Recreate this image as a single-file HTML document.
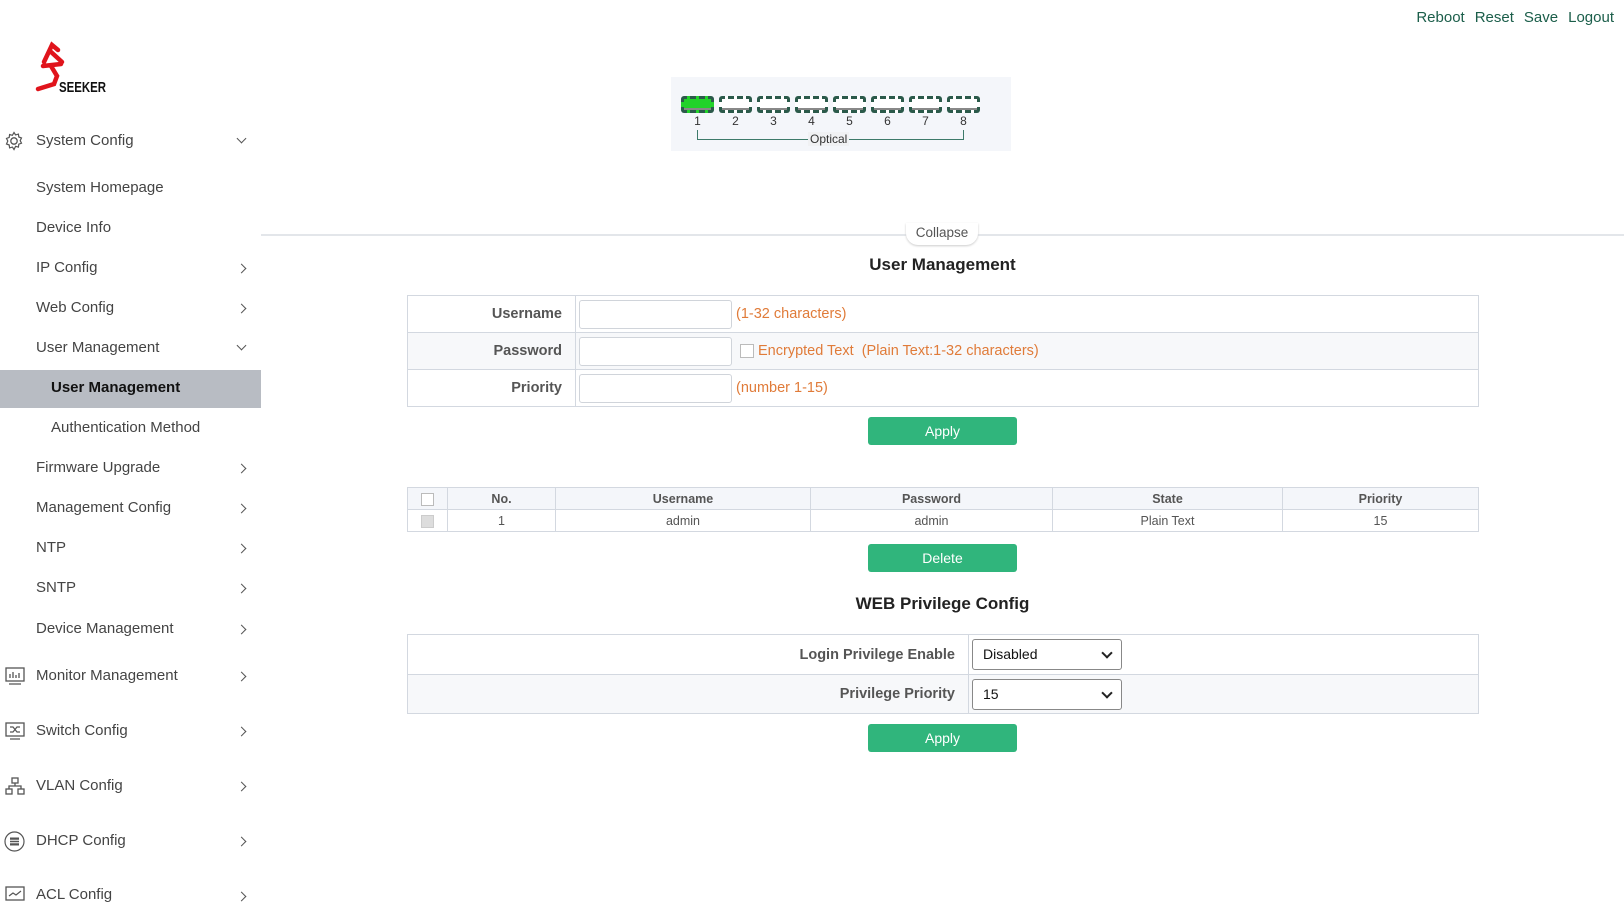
<!DOCTYPE html>
<html><head><meta charset="utf-8"><style>
*{box-sizing:border-box;margin:0;padding:0}
body{width:1624px;height:901px;overflow:hidden;background:#fff;font-family:"Liberation Sans","Noto Sans CJK SC",sans-serif;color:#333;position:relative}
.a{position:absolute}
.top{top:9px;right:10px;font-size:15px;color:#1b5e4a;word-spacing:0}
.top span{margin-left:10px}
.nav{font-size:15px;color:#444;white-space:nowrap}
.chev{position:absolute;left:238px;width:7px;height:7px;border-right:1.4px solid #555;border-bottom:1.4px solid #555;transform:rotate(-45deg)}
.chev.d{transform:rotate(45deg)}
table{border-collapse:collapse}
.f td{border:1px solid #d3d8e0;height:37px}
.lab{text-align:right;font-weight:bold;font-size:14.5px;color:#555;padding-right:13px}
.inp{display:inline-block;width:153px;height:29px;border:1px solid #d0d4da;border-radius:3px;vertical-align:middle;margin-left:3px}
.hint{color:#e07b39;font-size:14.5px;margin-left:4px;vertical-align:middle}
.btn{position:absolute;left:868px;width:149px;height:28px;background:#30b57c;color:#fff;font-size:14px;text-align:center;line-height:28px;border-radius:3px}
.t2 td{border:1px solid #d3d8e0;text-align:center;font-size:12.5px;color:#555;height:22px}
.sel{display:inline-block;width:150px;height:31px;border:1px solid #888;border-radius:3px;margin-left:3px;vertical-align:middle;font-size:14px;line-height:29px;padding-left:10px;position:relative;color:#111}
.sel:after{content:"";position:absolute;right:10px;top:9px;width:6px;height:6px;border-right:2px solid #222;border-bottom:2px solid #222;transform:rotate(45deg)}
.port{position:absolute;top:96px;width:33px;height:17px;border:3px dashed #2b5a4a;border-radius:3px;background:#fff;box-shadow:inset 0 -2px 0 #888}
.pn{position:absolute;top:114px;font-size:12px;color:#333;width:33px;text-align:center}
</style></head><body>
<div class="a top"><span>Reboot</span><span>Reset</span><span>Save</span><span>Logout</span></div>

<svg class="a" style="left:34px;top:40px" width="80" height="55" viewBox="0 0 80 55">
<path d="M10 22 L18 5 L24 10 M16 11 L28 22 M9 26 L27 24 M17 26 L23 36 L20 44 L4 49" stroke="#e0141c" stroke-width="4.5" fill="none" stroke-linecap="round"/>
<text x="25" y="52" font-family="Liberation Sans Narrow,Liberation Sans" font-size="15" font-weight="bold" fill="#111" textLength="47" lengthAdjust="spacingAndGlyphs">SEEKER</text>
</svg>

<div class="a" style="left:0;top:370px;width:261px;height:38px;background:#b8bcc3"></div>
<svg class="a" style="left:4px;top:131px" width="20" height="20" viewBox="0 0 20 20"><circle cx="10" cy="10" r="3.2" fill="none" stroke="#555" stroke-width="1.3"/><path d="M10 1.5l1.6 2.4 2.8-.8.4 2.9 2.7 1-1.3 2.6 1.3 2.6-2.7 1-.4 2.9-2.8-.8L10 18.5l-1.6-2.4-2.8.8-.4-2.9-2.7-1L3.8 10 2.5 7.4l2.7-1 .4-2.9 2.8.8z" fill="none" stroke="#555" stroke-width="1.2"/></svg>
<div class="a nav" style="left:36px;top:132px">System Config</div><div class="chev d" style="top:135px"></div>
<div class="a nav" style="left:36px;top:179px">System Homepage</div>
<div class="a nav" style="left:36px;top:219px">Device Info</div>
<div class="a nav" style="left:36px;top:259px">IP Config</div><div class="chev" style="top:265px"></div>
<div class="a nav" style="left:36px;top:299px">Web Config</div><div class="chev" style="top:305px"></div>
<div class="a nav" style="left:36px;top:339px">User Management</div><div class="chev d" style="top:342px"></div>
<div class="a nav" style="left:51px;top:379px;font-weight:bold;color:#111">User Management</div>
<div class="a nav" style="left:51px;top:419px">Authentication Method</div>
<div class="a nav" style="left:36px;top:459px">Firmware Upgrade</div><div class="chev" style="top:465px"></div>
<div class="a nav" style="left:36px;top:499px">Management Config</div><div class="chev" style="top:505px"></div>
<div class="a nav" style="left:36px;top:539px">NTP</div><div class="chev" style="top:545px"></div>
<div class="a nav" style="left:36px;top:579px">SNTP</div><div class="chev" style="top:585px"></div>
<div class="a nav" style="left:36px;top:620px">Device Management</div><div class="chev" style="top:626px"></div>
<svg class="a" style="left:5px;top:667px" width="20" height="18" viewBox="0 0 20 18"><rect x="1" y="1" width="18" height="13" fill="none" stroke="#555" stroke-width="1.3"/><path d="M5 11V7M8 11V5M11 11V8M14 11V6M4 17h12" stroke="#555" stroke-width="1.3"/></svg>
<div class="a nav" style="left:36px;top:667px">Monitor Management</div><div class="chev" style="top:673px"></div>
<svg class="a" style="left:5px;top:722px" width="20" height="18" viewBox="0 0 20 18"><rect x="1" y="1" width="18" height="13" fill="none" stroke="#555" stroke-width="1.3"/><path d="M5 5h3l4 5h3M5 10h3l4-5h3M5 17h10" stroke="#555" stroke-width="1.2" fill="none"/></svg>
<div class="a nav" style="left:36px;top:722px">Switch Config</div><div class="chev" style="top:728px"></div>
<svg class="a" style="left:5px;top:777px" width="20" height="19" viewBox="0 0 20 19"><rect x="7" y="1" width="6" height="5" fill="none" stroke="#555" stroke-width="1.3"/><rect x="1" y="12" width="6" height="5" fill="none" stroke="#555" stroke-width="1.3"/><rect x="13" y="12" width="6" height="5" fill="none" stroke="#555" stroke-width="1.3"/><path d="M10 6v3M4 12V9h12v3" stroke="#555" stroke-width="1.3" fill="none"/></svg>
<div class="a nav" style="left:36px;top:777px">VLAN Config</div><div class="chev" style="top:783px"></div>
<svg class="a" style="left:4px;top:831px" width="21" height="21" viewBox="0 0 21 21"><circle cx="10.5" cy="10.5" r="9.5" fill="none" stroke="#555" stroke-width="1.2"/><rect x="6" y="6.5" width="9" height="8" fill="#555"/><path d="M6 9.2h9M6 11.8h9" stroke="#fff" stroke-width="1"/></svg>
<div class="a nav" style="left:36px;top:832px">DHCP Config</div><div class="chev" style="top:838px"></div>
<svg class="a" style="left:5px;top:886px" width="20" height="15" viewBox="0 0 20 15"><rect x="1" y="1" width="18" height="13" fill="none" stroke="#555" stroke-width="1.3"/><path d="M4 10l4-3 3 2 5-4" stroke="#555" stroke-width="1.2" fill="none"/></svg>
<div class="a nav" style="left:36px;top:886px">ACL Config</div><div class="chev" style="top:893px"></div>

<div class="a" style="left:671px;top:77px;width:340px;height:74px;background:#f4f6fa"></div>
<div class="port" style="left:681px;background:#22d22a"></div><div class="pn" style="left:681px">1</div>
<div class="port" style="left:719px"></div><div class="pn" style="left:719px">2</div>
<div class="port" style="left:757px"></div><div class="pn" style="left:757px">3</div>
<div class="port" style="left:795px"></div><div class="pn" style="left:795px">4</div>
<div class="port" style="left:833px"></div><div class="pn" style="left:833px">5</div>
<div class="port" style="left:871px"></div><div class="pn" style="left:871px">6</div>
<div class="port" style="left:909px"></div><div class="pn" style="left:909px">7</div>
<div class="port" style="left:947px"></div><div class="pn" style="left:947px">8</div>
<div class="a" style="left:697px;top:130px;width:267px;height:10px;border:1px solid #3d7a6a;border-top:none"></div>
<div class="a" style="left:808px;top:132px;font-size:12px;background:#f0f1f3;padding:0 2px">Optical</div>

<div class="a" style="left:261px;top:234px;width:1363px;height:2px;background:#e3e6ea"></div>
<div class="a" style="left:906px;top:223px;width:72px;height:22px;background:#fff;border-radius:0 0 12px 12px;box-shadow:0 1px 2px #ccc;font-size:13.5px;color:#555;text-align:center;line-height:20px">Collapse</div>

<div class="a" style="left:0;width:1885px;top:255px;text-align:center;font-weight:bold;font-size:17px;color:#222">User Management</div>

<table class="a f" style="left:407px;top:295px;width:1072px">
<tr><td class="lab" style="width:168px">Username</td><td><span class="inp"></span><span class="hint">(1-32 characters)</span></td></tr>
<tr style="background:#f7f8fa"><td class="lab">Password</td><td><span class="inp" style="background:#fff"></span><span style="display:inline-block;width:14px;height:14px;border:1px solid #bbb;background:#fff;vertical-align:middle;margin-left:8px"></span><span class="hint">Encrypted Text&nbsp; (Plain Text:1-32 characters)</span></td></tr>
<tr><td class="lab">Priority</td><td><span class="inp"></span><span class="hint">(number 1-15)</span></td></tr>
</table>
<div class="btn" style="top:417px">Apply</div>

<table class="a t2" style="left:407px;top:487px;width:1072px">
<tr style="background:#f4f6fa;font-weight:bold"><td style="width:40px"><span style="display:inline-block;width:13px;height:13px;border:1px solid #bbb;background:#fff;vertical-align:middle"></span></td><td style="width:108px;font-weight:bold">No.</td><td style="width:255px;font-weight:bold">Username</td><td style="width:242px;font-weight:bold">Password</td><td style="width:230px;font-weight:bold">State</td><td style="font-weight:bold">Priority</td></tr>
<tr><td><span style="display:inline-block;width:13px;height:13px;border:1px solid #ccc;background:#ddd;vertical-align:middle"></span></td><td>1</td><td>admin</td><td>admin</td><td>Plain Text</td><td>15</td></tr>
</table>
<div class="btn" style="top:544px">Delete</div>

<div class="a" style="left:0;width:1885px;top:594px;text-align:center;font-weight:bold;font-size:17px;color:#222">WEB Privilege Config</div>
<table class="a f" style="left:407px;top:634px;width:1072px">
<tr><td class="lab" style="width:561px;height:40px">Login Privilege Enable</td><td><span class="sel">Disabled</span></td></tr>
<tr style="background:#f7f8fa"><td class="lab" style="height:39px">Privilege Priority</td><td><span class="sel" style="background:#fff">15</span></td></tr>
</table>
<div class="btn" style="top:724px">Apply</div>
</body></html>
